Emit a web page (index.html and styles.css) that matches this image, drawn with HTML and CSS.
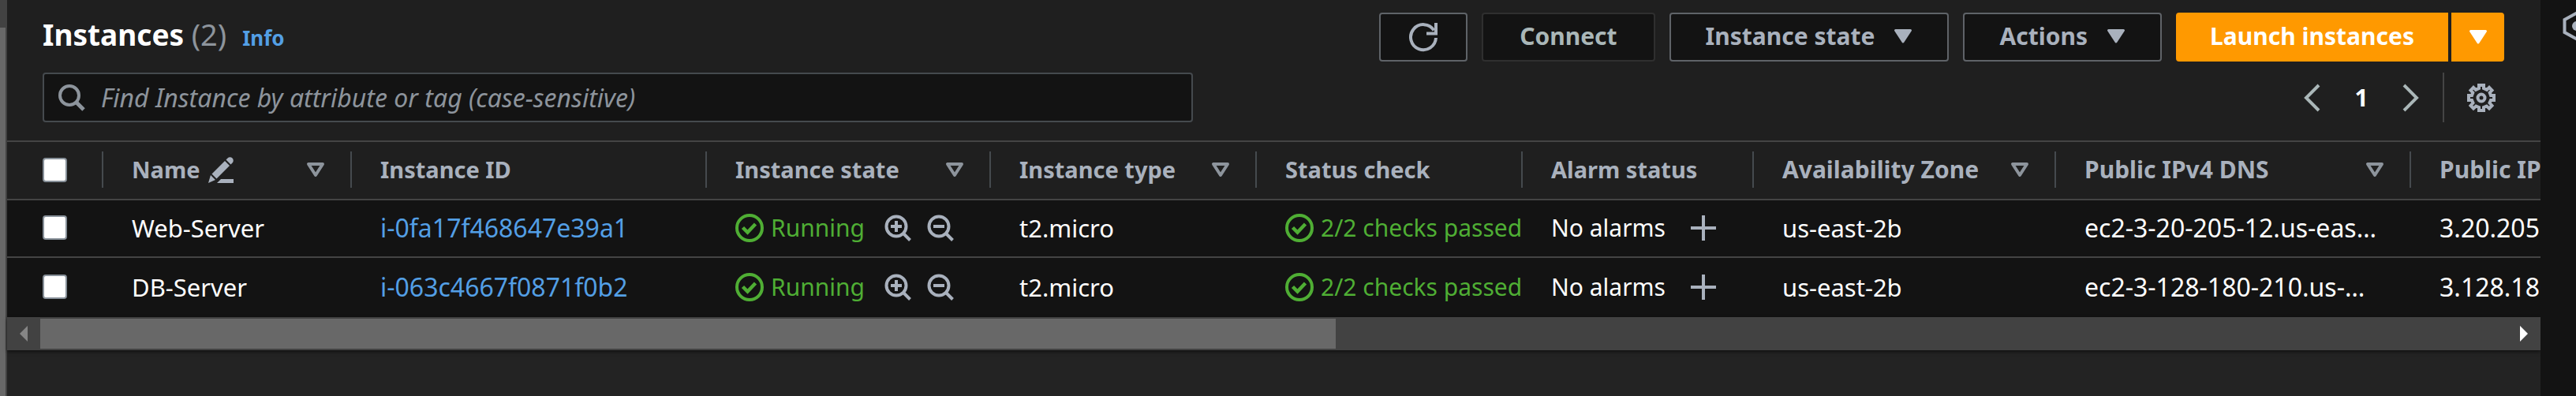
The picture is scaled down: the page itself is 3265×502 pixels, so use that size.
FILE: index.html
```html
<!DOCTYPE html>
<html lang="en">
<head>
<meta charset="utf-8">
<title>Instances</title>
<link rel="stylesheet" href="styles.css">
</head>
<body>
<svg class="defs" aria-hidden="true">
  <symbol id="ok" viewBox="0 0 36 36"><circle cx="18" cy="18" r="16" fill="none" stroke="currentColor" stroke-width="4"/><path d="M9.500 17.500l6 6L25.500 13" fill="none" stroke="currentColor" stroke-width="4.500"/></symbol>
  <symbol id="zoom-in" viewBox="0 0 34 34"><circle cx="15" cy="15" r="12.500" fill="none" stroke="currentColor" stroke-width="4"/><path d="M24 24l8.500 8.500M8 15h14M15 8v14" fill="none" stroke="currentColor" stroke-width="4"/></symbol>
  <symbol id="zoom-out" viewBox="0 0 34 34"><circle cx="15" cy="15" r="12.500" fill="none" stroke="currentColor" stroke-width="4"/><path d="M24 24l8.500 8.500M8 15h14" fill="none" stroke="currentColor" stroke-width="4"/></symbol>
  <symbol id="plus" viewBox="0 0 32 32"><path d="M0 16h32M16 0v32" stroke="currentColor" stroke-width="4"/></symbol>
  <symbol id="caret" viewBox="0 0 24 20"><path d="M2.500 2.500h19L12 17z" fill="currentColor" stroke="currentColor" stroke-width="3" stroke-linejoin="round"/></symbol>
  <symbol id="sort" viewBox="0 0 24 20"><path d="M3 3h18L12 17z" fill="none" stroke="currentColor" stroke-width="4" stroke-linejoin="round"/></symbol>
</svg>

<div class="page-scroll"><div class="page-thumb"></div></div>

<main class="panel">
  <header class="toolbar">
    <div class="bar">
      <div class="title">
        <h1>Instances <span class="count">(2)</span></h1>
        <a class="info" href="#info">Info</a>
      </div>
      <div class="actions">
        <button class="btn refresh" type="button" aria-label="Refresh"><svg width="38" height="38" viewBox="0 0 38 38" fill="none" stroke="currentColor" stroke-width="4"><path d="M35 20A16 16 0 1 1 32.500 10.500"/><path d="M35 1v13.500H23"/></svg></button>
        <button class="btn muted" type="button">Connect</button>
        <button class="btn menu" type="button">Instance state<svg class="caret"><use href="#caret"/></svg></button>
        <button class="btn menu" type="button">Actions<svg class="caret"><use href="#caret"/></svg></button>
        <div class="split">
          <button class="btn primary" type="button">Launch instances</button>
          <button class="btn primary more" type="button" aria-label="More launch options"><svg class="caret"><use href="#caret"/></svg></button>
        </div>
      </div>
    </div>
    <div class="bar">
      <label class="search">
        <svg width="34" height="34" viewBox="0 0 34 34"><circle cx="14" cy="14" r="12" fill="none" stroke="currentColor" stroke-width="4"/><path d="M22 22l10 10" stroke="currentColor" stroke-width="5"/></svg>
        <input type="text" aria-label="Find Instance" placeholder="Find Instance by attribute or tag (case-sensitive)">
      </label>
      <div class="paging">
        <button class="icon page-arrow" type="button" aria-label="Previous page"><svg width="22" height="36" viewBox="0 0 22 36"><path d="M20 2L4 18l16 16" fill="none" stroke="currentColor" stroke-width="4"/></svg></button>
        <button class="icon page-no" type="button">1</button>
        <button class="icon page-arrow" type="button" aria-label="Next page"><svg width="22" height="36" viewBox="0 0 22 36"><path d="M2 2l16 16L2 34" fill="none" stroke="currentColor" stroke-width="4"/></svg></button>
        <button class="icon settings" type="button" aria-label="Preferences"><svg width="36" height="36" viewBox="0 0 36 36" fill="none" stroke="currentColor" stroke-width="4"><path d="M15 2h6v4l4 1.800 3-3L31.500 8.500l-2.800 3L30 15h4v6h-4l-1.500 3.500 3 3.500-3.500 3.500-3.300-3L21 30v4h-6v-4l-3.700-1.500-3.300 3L4.500 28l3-3.500L6 21H2v-6h4l1.300-3.500-2.800-3L8 4.800l3 3L15 6z"/><circle cx="18" cy="18" r="4.500"/></svg></button>
      </div>
    </div>
  </header>

  <div class="table-wrap">
    <table>
      <colgroup><col class="c-check"><col class="c-name"><col class="c-id"><col class="c-state"><col class="c-type"><col class="c-type"><col class="c-alarm"><col class="c-zone"><col class="c-id"><col class="c-id"></colgroup>
      <thead>
        <tr>
          <th><div class="head first"><input type="checkbox" aria-label="Select all"></div></th>
          <th><div class="head"><span class="name">Name <svg width="32" height="33" viewBox="0 0 32 33" fill="currentColor"><path d="M0 33l3-10 6 6zM4.500 21.500L21 5l6 6L10.500 27.500zM22.500 3.500l2-2a4 4 0 0 1 6 6l-2 2zM11 33l5-5h16v5z"/></svg></span><svg class="sort"><use href="#sort"/></svg></div></th>
          <th><div class="head">Instance ID</div></th>
          <th><div class="head">Instance state<svg class="sort"><use href="#sort"/></svg></div></th>
          <th><div class="head">Instance type<svg class="sort"><use href="#sort"/></svg></div></th>
          <th><div class="head">Status check</div></th>
          <th><div class="head">Alarm status</div></th>
          <th class="wide"><div class="head">Availability Zone<svg class="sort"><use href="#sort"/></svg></div></th>
          <th class="wide"><div class="head">Public IPv4 DNS<svg class="sort"><use href="#sort"/></svg></div></th>
          <th class="wide"><div class="head">Public IPv4</div></th>
        </tr>
      </thead>
      <tbody>
        <tr>
          <td class="first"><input type="checkbox" aria-label="Select Web-Server"></td>
          <td>Web-Server</td>
          <td class="long"><a href="#i-0fa17f468647e39a1">i-0fa17f468647e39a1</a></td>
          <td><div class="cell"><span class="ok"><svg><use href="#ok"/></svg>Running</span><span class="tools"><button class="icon" type="button" aria-label="Filter in"><svg><use href="#zoom-in"/></svg></button><button class="icon" type="button" aria-label="Filter out"><svg><use href="#zoom-out"/></svg></button></span></div></td>
          <td>t2.micro</td>
          <td><div class="cell ok"><svg><use href="#ok"/></svg>2/2 checks passed</div></td>
          <td><div class="cell alarm">No alarms<button class="icon add" type="button" aria-label="Add alarm"><svg><use href="#plus"/></svg></button></div></td>
          <td>us-east-2b</td>
          <td class="long">ec2-3-20-205-12.us-eas…</td>
          <td class="long">3.20.205.12</td>
        </tr>
        <tr>
          <td class="first"><input type="checkbox" aria-label="Select DB-Server"></td>
          <td>DB-Server</td>
          <td class="long"><a href="#i-063c4667f0871f0b2">i-063c4667f0871f0b2</a></td>
          <td><div class="cell"><span class="ok"><svg><use href="#ok"/></svg>Running</span><span class="tools"><button class="icon" type="button" aria-label="Filter in"><svg><use href="#zoom-in"/></svg></button><button class="icon" type="button" aria-label="Filter out"><svg><use href="#zoom-out"/></svg></button></span></div></td>
          <td>t2.micro</td>
          <td><div class="cell ok"><svg><use href="#ok"/></svg>2/2 checks passed</div></td>
          <td><div class="cell alarm">No alarms<button class="icon add" type="button" aria-label="Add alarm"><svg><use href="#plus"/></svg></button></div></td>
          <td>us-east-2b</td>
          <td class="long">ec2-3-128-180-210.us-…</td>
          <td class="long">3.128.180.210</td>
        </tr>
      </tbody>
    </table>
  </div>
  <div class="hscroll">
    <button class="icon step back" type="button" aria-label="Scroll left"><svg width="10" height="20" viewBox="0 0 10 20"><path d="M10 0v20L0 10z" fill="currentColor"/></svg></button>
    <div class="track"><div class="thumb"></div></div>
    <button class="icon step" type="button" aria-label="Scroll right"><svg width="10" height="20" viewBox="0 0 10 20"><path d="M0 0v20l10-10z" fill="currentColor"/></svg></button>
  </div>
</main>

<aside class="rail">
  <button class="icon" type="button" aria-label="Open side panel"><svg width="36" height="38" viewBox="0 0 36 38"><path d="M18 2.500l15.500 8.500v16L18 35.500 2.500 27V11z" fill="none" stroke="currentColor" stroke-width="4"/><circle cx="18" cy="19" r="6" fill="currentColor"/></svg></button>
</aside>
</body>
</html>
```

FILE: styles.css
```css
* { box-sizing: border-box; }
body {
  margin: 0;
  display: flex;
  min-height: 100vh;
  overflow: hidden;
  background: #131313;
  color: #fff;
  font: 30px/40px "Noto Sans", "Open Sans", sans-serif;
}
svg { display: block; flex: none; }
.defs { position: absolute; width: 0; height: 0; }
button, input { font: inherit; color: inherit; margin: 0; }

.page-scroll {
  flex: none;
  width: 9px;
  padding: 35px 2px 0 0;
  display: flex;
  background: #424242;
}
.page-thumb { flex: 1; background: #686868; }

.panel { flex: 1; min-width: 0; background: #232323; }
.toolbar {
  display: flex;
  flex-direction: column;
  gap: 14px;
  padding: 16px 46px 23px 45px;
  background: #1f1f1f;
}
.bar { display: flex; justify-content: space-between; align-items: center; }
.title { display: flex; align-items: baseline; gap: 20px; padding-bottom: 8px; }
h1 { margin: 0; font-size: 37px; line-height: 50px; }
.count { font-size: 38px; font-weight: 400; color: #8d949c; }
.info { font-size: 26px; font-weight: 700; }
a { color: #539fe5; text-decoration: none; }

.actions { display: flex; gap: 18px; }
.btn {
  display: flex;
  align-items: center;
  justify-content: center;
  gap: 24px;
  height: 62px;
  padding: 0 46px 2px;
  border: 2px solid #5f6368;
  border-radius: 4px;
  background: #131313;
  color: #a9b1bd;
  font-weight: 700;
  white-space: nowrap;
}
.menu { padding: 0 44px 2px; }
.refresh { width: 112px; padding: 0; }
.muted { border-color: #2f2f2f; color: #aab7b8; }
.caret { width: 24px; height: 20px; }
.split { display: flex; gap: 4px; }
.primary { padding: 0 41px 2px; border-color: #f90; background: #f90; color: #fff; border-radius: 4px 0 0 4px; }
.more { width: 67px; padding: 0; border-radius: 0 4px 4px 0; }

.search {
  display: flex;
  align-items: center;
  gap: 20px;
  width: 1458px;
  max-width: 60%;
  height: 63px;
  padding: 0 18px;
  border: 2px solid #454a4e;
  border-radius: 4px;
  background: #131313;
  color: #8d949c;
}
.search input { flex: 1; min-width: 0; padding: 0; border: 0; outline: 0; background: none; font-size: 32px; }
.search input::placeholder { color: #8d949c; font-style: italic; opacity: 1; }

.icon { padding: 0; border: 0; background: none; color: #a9b1bd; }
.paging { display: flex; align-items: center; height: 63px; }
.page-arrow { color: #aab7b8; }
.page-no { width: 104px; color: #fff; font-weight: 700; }
.settings { align-self: stretch; display: flex; align-items: center; margin-left: 29px; padding: 0 11px 0 29px; border-left: 2px solid #444; }

.table-wrap { overflow: hidden; }
table { width: 3497px; table-layout: fixed; border-collapse: separate; border-spacing: 0; }
.c-check { width: 122px; }
.c-name { width: 315px; }
.c-id { width: 450px; }
.c-state { width: 360px; }
.c-type { width: 337px; }
.c-alarm { width: 293px; }
.c-zone { width: 383px; }
th, td { padding: 0; overflow: hidden; text-align: left; white-space: nowrap; }
th { height: 76px; padding-bottom: 2px; background: #1f1f1f; border: solid #444; border-width: 2px 0; color: #a9b1bd; font-size: 29px; }
.wide { font-size: 30px; }
.head {
  display: flex;
  align-items: center;
  justify-content: space-between;
  height: 46px;
  padding: 0 32px 0 36px;
  border-right: 2px solid #454a4e;
}
.name { display: flex; align-items: center; gap: 10px; }
.sort { width: 24px; height: 20px; color: #8d949c; }
td { height: 73px; padding: 0 0 2px 36px; background: #131313; border-bottom: 2px solid #444; font-size: 31px; }
.long { font-size: 32px; }
tr:last-child td { height: 75px; border-bottom: 0; }
.head.first, td.first { padding-left: 45px; }
input[type="checkbox"] {
  appearance: none;
  display: block;
  width: 31px;
  height: 31px;
  border: 2px solid #879099;
  border-radius: 4px;
  background: #fff;
}
.cell, .ok, .tools { display: flex; align-items: center; }
.cell { font-size: 30px; }
.ok { gap: 9px; color: #4fae34; }
.ok svg { width: 36px; height: 36px; }
.tools { gap: 20px; margin-left: 25px; }
.tools svg { width: 34px; height: 34px; }
.alarm { gap: 32px; }
.add svg { width: 32px; height: 32px; }

.hscroll { display: flex; height: 42px; background: #424242; box-shadow: 0 2px 4px #0008; }
.step { width: 42px; display: flex; align-items: center; justify-content: center; color: #fff; }
.back { color: #868686; }
.track { flex: 1; padding: 2px 0; }
.thumb { width: 52.5%; height: 100%; background: #686868; }

.rail { flex: none; width: 45px; padding: 14px 0 0 28px; overflow: hidden; background: #131313; }
```
